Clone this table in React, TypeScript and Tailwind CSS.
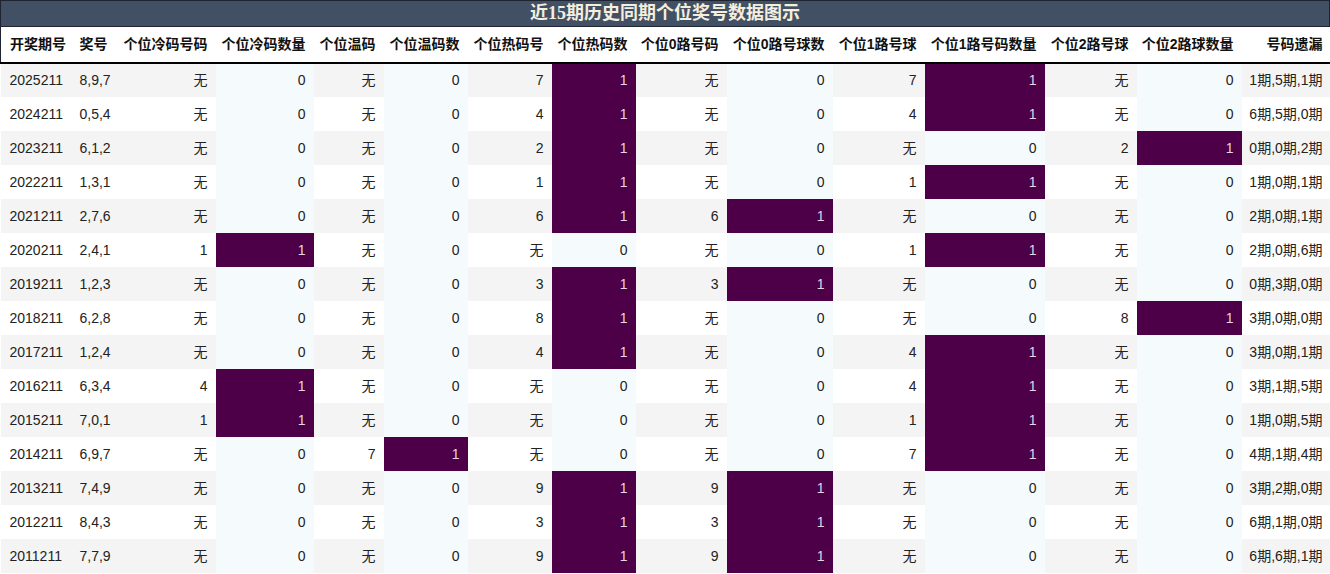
type Row = string[];

const headers: { label: string; w: string; left?: boolean }[] = [
  { label: "开奖期号", w: "w-[70px]", left: true },
  { label: "奖号", w: "w-[47px]", left: true },
  { label: "个位冷码号码", w: "w-[98px]" },
  { label: "个位冷码数量", w: "w-[98px]" },
  { label: "个位温码", w: "w-[70px]" },
  { label: "个位温码数", w: "w-[84px]" },
  { label: "个位热码号", w: "w-[84px]" },
  { label: "个位热码数", w: "w-[84px]" },
  { label: "个位0路号码", w: "w-[91px]" },
  { label: "个位0路号球数", w: "w-[106px]" },
  { label: "个位1路号球", w: "w-[92px]" },
  { label: "个位1路号码数量", w: "w-[120px]" },
  { label: "个位2路号球", w: "w-[92px]" },
  { label: "个位2路球数量", w: "w-[105px]" },
  { label: "号码遗漏", w: "w-[89px]" },
];

const rows: Row[] = [
  ["2025211", "8,9,7", "无", "0", "无", "0", "7", "1", "无", "0", "7", "1", "无", "0", "1期,5期,1期"],
  ["2024211", "0,5,4", "无", "0", "无", "0", "4", "1", "无", "0", "4", "1", "无", "0", "6期,5期,0期"],
  ["2023211", "6,1,2", "无", "0", "无", "0", "2", "1", "无", "0", "无", "0", "2", "1", "0期,0期,2期"],
  ["2022211", "1,3,1", "无", "0", "无", "0", "1", "1", "无", "0", "1", "1", "无", "0", "1期,0期,1期"],
  ["2021211", "2,7,6", "无", "0", "无", "0", "6", "1", "6", "1", "无", "0", "无", "0", "2期,0期,1期"],
  ["2020211", "2,4,1", "1", "1", "无", "0", "无", "0", "无", "0", "1", "1", "无", "0", "2期,0期,6期"],
  ["2019211", "1,2,3", "无", "0", "无", "0", "3", "1", "3", "1", "无", "0", "无", "0", "0期,3期,0期"],
  ["2018211", "6,2,8", "无", "0", "无", "0", "8", "1", "无", "0", "无", "0", "8", "1", "3期,0期,0期"],
  ["2017211", "1,2,4", "无", "0", "无", "0", "4", "1", "无", "0", "4", "1", "无", "0", "3期,0期,1期"],
  ["2016211", "6,3,4", "4", "1", "无", "0", "无", "0", "无", "0", "4", "1", "无", "0", "3期,1期,5期"],
  ["2015211", "7,0,1", "1", "1", "无", "0", "无", "0", "无", "0", "1", "1", "无", "0", "1期,0期,5期"],
  ["2014211", "6,9,7", "无", "0", "7", "1", "无", "0", "无", "0", "7", "1", "无", "0", "4期,1期,4期"],
  ["2013211", "7,4,9", "无", "0", "无", "0", "9", "1", "9", "1", "无", "0", "无", "0", "3期,2期,0期"],
  ["2012211", "8,4,3", "无", "0", "无", "0", "3", "1", "3", "1", "无", "0", "无", "0", "6期,1期,0期"],
  ["2011211", "7,7,9", "无", "0", "无", "0", "9", "1", "9", "1", "无", "0", "无", "0", "6期,6期,1期"],
];

const countCols = new Set([3, 5, 7, 9, 11, 13]);

function cellClass(col: number, value: string, striped: boolean) {
  const align = col < 2 ? "text-left pl-[9px]" : "text-right pr-[8px]";
  if (countCols.has(col)) {
    if (value === "1") return `${align} bg-[#4d0047] text-[#e6d6e6]`;
    return `${align} bg-[#f5fbfc] text-[#222]`;
  }
  return `${align} ${striped ? "bg-[#f4f4f4]" : "bg-white"} text-[#222]`;
}

export default function App() {
  return (
    <div className="w-[1330px] bg-white font-['Liberation_Sans','Noto_Sans_CJK_SC',sans-serif]">
      <div className="h-[27px] border border-[#1e2530] bg-[#425066] text-center font-['Liberation_Serif','Noto_Sans_CJK_SC',serif] text-[18px] font-bold leading-[25px] text-[#f4eedc]">
        近15期历史同期个位奖号数据图示
      </div>
      <table className="w-[1330px] table-fixed border-collapse text-[14px]">
        <colgroup>
          {headers.map((h) => (
            <col key={h.label} className={h.w} />
          ))}
        </colgroup>
        <thead>
          <tr className="h-[36px] border-b-2 border-black">
            {headers.map((h, i) => (
              <th
                key={h.label}
                className={`whitespace-nowrap font-bold text-[#111] ${
                  h.left ? "text-left pl-[9px]" : "text-right pr-[8px]"
                } ${i === 0 ? "border-l border-[#1e2530]" : ""}`}
              >
                {h.label}
              </th>
            ))}
          </tr>
        </thead>
        <tbody>
          {rows.map((r, ri) => (
            <tr key={r[0]} className="h-[34px]">
              {r.map((v, ci) => (
                <td key={ci} className={`whitespace-nowrap ${cellClass(ci, v, ri % 2 === 0)}`}>
                  {v}
                </td>
              ))}
            </tr>
          ))}
        </tbody>
      </table>
    </div>
  );
}
